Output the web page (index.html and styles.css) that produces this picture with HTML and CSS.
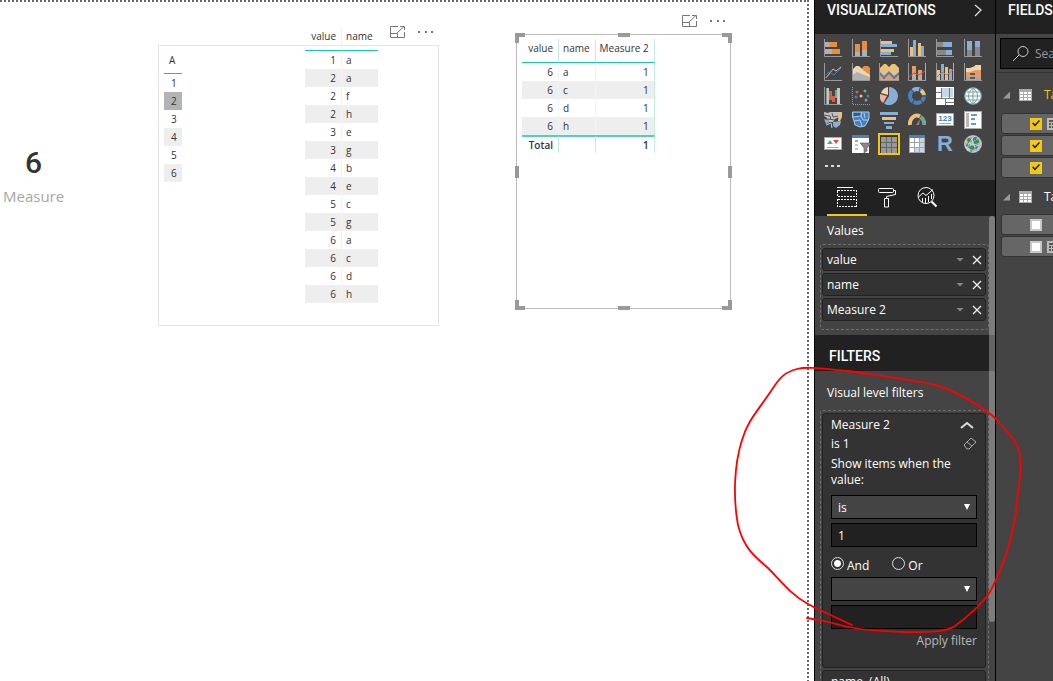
FILE: index.html
```html
<!DOCTYPE html>
<html lang="en">
<head>
<meta charset="utf-8">
<title>Report editor</title>
<link rel="stylesheet" href="styles.css">
</head>
<body>
<div class="app">
  <main class="canvas">
    <div class="guide-top"></div>
    <div class="guide-right"></div>

    <section class="visual card-visual">
      <div class="card-value">6</div>
      <div class="card-label">Measure</div>
    </section>

    <section class="visual matrix-visual">
      <table class="grid matrix">
        <thead><tr><th>A</th></tr></thead>
        <tbody>
          <tr><td>1</td></tr><tr class="selected"><td>2</td></tr><tr><td>3</td></tr>
          <tr><td>4</td></tr><tr><td>5</td></tr><tr><td>6</td></tr>
        </tbody>
      </table>
    </section>

    <section class="visual list-visual">
      <table class="grid">
        <thead><tr><th class="num">value</th><th>name</th></tr></thead>
        <tbody>
          <tr><td class="num">1</td><td>a</td></tr>
          <tr><td class="num">2</td><td>a</td></tr>
          <tr><td class="num">2</td><td>f</td></tr>
          <tr><td class="num">2</td><td>h</td></tr>
          <tr><td class="num">3</td><td>e</td></tr>
          <tr><td class="num">3</td><td>g</td></tr>
          <tr><td class="num">4</td><td>b</td></tr>
          <tr><td class="num">4</td><td>e</td></tr>
          <tr><td class="num">5</td><td>c</td></tr>
          <tr><td class="num">5</td><td>g</td></tr>
          <tr><td class="num">6</td><td>a</td></tr>
          <tr><td class="num">6</td><td>c</td></tr>
          <tr><td class="num">6</td><td>d</td></tr>
          <tr><td class="num">6</td><td>h</td></tr>
        </tbody>
      </table>
    </section>
    <div class="visual actions actions-list">
      <button class="plain" aria-label="Focus mode"><svg width="16" height="14" viewBox="0 0 16 14" fill="none" stroke="#777"><path d="M.5 6V1.500H8M.5 5V12.500H14.500V7M.5 8.500H7.500V12.500M7 8L14 1.500M10 1.500H14.500V5"/></svg></button>
      <button class="plain" aria-label="More options"><svg width="16" height="4" fill="#777"><rect x="0" y="1" width="2" height="2"/><rect x="7" y="1" width="2" height="2"/><rect x="13" y="1" width="2" height="2"/></svg></button>
    </div>

    <section class="visual selected-visual">
      <table class="grid ruled">
        <thead><tr><th class="num">value</th><th>name</th><th class="measure">Measure 2</th></tr></thead>
        <tbody>
          <tr><td class="num">6</td><td>a</td><td class="measure">1</td></tr>
          <tr><td class="num">6</td><td>c</td><td class="measure">1</td></tr>
          <tr><td class="num">6</td><td>d</td><td class="measure">1</td></tr>
          <tr><td class="num">6</td><td>h</td><td class="measure">1</td></tr>
        </tbody>
        <tfoot><tr><td class="num">Total</td><td></td><td class="measure">1</td></tr></tfoot>
      </table>
      <i class="corner nw"></i><i class="corner ne"></i><i class="corner sw"></i><i class="corner se"></i>
      <i class="side n"></i><i class="side s"></i><i class="side w"></i><i class="side e"></i>
    </section>
    <div class="visual actions actions-selected">
      <button class="plain" aria-label="Focus mode"><svg width="16" height="14" viewBox="0 0 16 14" fill="none" stroke="#777"><path d="M.5 6V1.500H8M.5 5V12.500H14.500V7M.5 8.500H7.500V12.500M7 8L14 1.500M10 1.500H14.500V5"/></svg></button>
      <button class="plain" aria-label="More options"><svg width="16" height="4" fill="#777"><rect x="0" y="1" width="2" height="2"/><rect x="7" y="1" width="2" height="2"/><rect x="13" y="1" width="2" height="2"/></svg></button>
    </div>
  </main>

  <aside class="pane viz-pane">
    <header class="pane-head"><h2>VISUALIZATIONS</h2>
      <button class="plain" aria-label="Collapse"><svg width="10" height="14" fill="none" stroke="#ddd" stroke-width="1.3"><path d="M2 2L8 7L2 13"/></svg></button>
    </header>
    <div class="gallery">
      <button class="plain" aria-label="Stacked bar chart"><svg viewBox="0 0 18 18"><path class="axis" d="M.5 0V17.500H18"/><path fill="#b0b0b0" d="M1 3h4v5H1zM1 10h7v5H1z"/><path fill="#e68f43" d="M5 3h8v5H5zM8 10h8v5H8z"/></svg></button>
      <button class="plain" aria-label="Stacked column chart"><svg viewBox="0 0 18 18"><path class="axis" d="M.5 0V17.500H18"/><path fill="#b0b0b0" d="M3 13h5v4H3zM10 11h5v6h-5z"/><path fill="#e68f43" d="M3 5h5v8H3zM10 2h5v9h-5z"/></svg></button>
      <button class="plain" aria-label="Clustered bar chart"><svg viewBox="0 0 18 18"><path class="axis" d="M.5 0V17.500H18"/><path fill="#ecc27b" d="M1 2h11v3H1zM1 10h13v3H1z"/><path fill="#88aed6" d="M1 5h16v3H1zM1 13h10v3H1z"/></svg></button>
      <button class="plain" aria-label="Clustered column chart"><svg viewBox="0 0 18 18"><path class="axis" d="M.5 0V17.500H18"/><path fill="#ecc27b" d="M2 8h3v9H2zM10 4h3v13h-3z"/><path fill="#88aed6" d="M5 1h3v16H5zM13 7h3v10h-3z"/></svg></button>
      <button class="plain" aria-label="100% stacked bar chart"><svg viewBox="0 0 18 18"><path class="axis" d="M.5 0V17.500H18"/><path fill="#888" d="M1 3h6v5H1zM1 11h9v5H1z"/><path fill="#88aed6" d="M7 3h9v5H7zM10 11h6v5h-6z"/></svg></button>
      <button class="plain" aria-label="100% stacked column chart"><svg viewBox="0 0 18 18"><path class="axis" d="M.5 0V17.500H18"/><path fill="#888" d="M3 11h5v6H3zM11 8h5v9h-5z"/><path fill="#88aed6" d="M3 2h5v9H3zM11 2h5v6h-5z"/></svg></button>

      <button class="plain" aria-label="Line chart"><svg viewBox="0 0 18 18" fill="none"><path class="axis" d="M.5 0V17.500H18"/><path stroke="#ecb29e" d="M2 15L9 6L12 8L17 4"/><path stroke="#4a80bb" d="M2 12L5 9L10 12L17 5"/></svg></button>
      <button class="plain" aria-label="Area chart"><svg viewBox="0 0 18 18"><path fill="#e68f43" d="M6 9L12 3H16L18 5V16H6z"/><path fill="#efd6af" d="M1 6L4 3H7L11 7L18 12V17H1z"/><path fill="#b0b0b0" d="M1 12L5 9L10 11L18 14V17H1z"/><path class="axis" d="M.5 0V17.500H18"/></svg></button>
      <button class="plain wide" aria-label="Stacked area chart"><svg viewBox="0 0 20 18"><path fill="#4a80bb" d="M1 7H20V15H1z"/><path fill="#ecc27b" d="M1 5L5 1H7L10 4L13 1H16L20 5V9L15 13L10 8L5 13L1 9z"/><path fill="#e99b66" d="M1 18V12L5 16L10 11L15 16L20 12V18z"/><path class="axis" d="M.5 0V17.500H20"/></svg></button>
      <button class="plain" aria-label="Line and stacked column chart"><svg viewBox="0 0 18 18" fill="none"><path class="axis" d="M.5 0V17.500H18"/><path fill="#e99b66" d="M4 3h4v8H4zM10 7h4v5h-4z"/><path fill="#b0b0b0" d="M4 11h4v6H4zM10 12h4v5h-4z"/><path stroke="#d64f3c" d="M1 14L6 10L11 12L17 8"/><path stroke="#e99b66" d="M17.500 0V17"/></svg></button>
      <button class="plain" aria-label="Line and clustered column chart"><svg viewBox="0 0 18 18" fill="none"><path class="axis" d="M.5 0V17.500H18"/><path fill="#ecc27b" d="M1 7h3v10H1zM9 4h3v13H9z"/><path fill="#88aed6" d="M5 1h3v16H5zM13 6h3v11h-3z"/><path stroke="#e36b4a" d="M1 14L6 9L11 12L17 7"/><path stroke="#e99b66" d="M17.500 0V17"/></svg></button>
      <button class="plain" aria-label="Ribbon chart"><svg viewBox="0 0 18 18"><path class="axis" d="M.5 0V17.500H18"/><path fill="#e99b66" d="M2 7H17V17H2z"/><path fill="#efd6af" d="M2 5H6L11 3V2H17V7H11L6 9H2z"/><path fill="#7c4e36" d="M6 10h5v2H6zM6 14h5v2H6z"/><path fill="#88aed6" d="M2 14h4v3H2zM7 12h4v2H7zM12 14h4v3h-4z"/></svg></button>

      <button class="plain" aria-label="Waterfall chart"><svg viewBox="0 0 18 18"><path class="axis" d="M.5 0V17.500H18"/><path fill="#c4c4c4" d="M2 1h3v16H2zM13 1h3v16h-3z"/><path fill="#75a595" d="M2 1h1v16H2zM11 3h2v8h-2z"/><path fill="#d95d45" d="M5 4h3v9H5zM8 9h3v6H8z"/></svg></button>
      <button class="plain" aria-label="Scatter chart"><svg viewBox="0 0 18 18"><path class="axis" stroke-dasharray="1" d="M.5 0V17.500H18"/><circle cx="5" cy="5" r="1.500" fill="#d95d45"/><g fill="#75a595"><circle cx="13" cy="4" r="1.500"/><circle cx="14" cy="13" r="1.500"/></g><circle cx="9" cy="9" r="1.500" fill="#ecc27b"/><g fill="#4a80bb"><circle cx="4" cy="10" r="1.500"/><circle cx="16" cy="9" r="1.500"/></g></svg></button>
      <button class="plain" aria-label="Pie chart"><svg viewBox="0 0 18 18"><path fill="#88aed6" d="M9 9V0A9 9 0 1 1 4 16.500z"/><path fill="#efd6af" d="M8 8V0A9 9 0 0 0 1 6z"/><path fill="#ecb29e" d="M7 9L0 7A9 9 0 0 0 3 16z"/></svg></button>
      <button class="plain" aria-label="Donut chart"><svg viewBox="0 0 18 18" fill="none" stroke-width="4"><circle cx="9" cy="9" r="7" stroke="#4a80bb"/><path stroke="#88aed6" d="M5 3.300A7 7 0 0 1 12 2.700"/><path stroke="#ecc27b" d="M13 3.300A7 7 0 0 1 16 8"/><path stroke="#444" stroke-width="1" d="M3 2L6 6M12 1L11 5M18 9H13M15 16L12 12M4 17L6 13"/></svg></button>
      <button class="plain" aria-label="Treemap"><svg viewBox="0 0 18 18" shape-rendering="crispEdges"><path fill="#fff" d="M0 0h18v18H0z"/><path fill="#c5d8ea" d="M5 1h8v9H5zM14 1h3v9h-3z"/><path stroke="#777" fill="none" d="M0 5.500H5M5.500 1V11M13.500 1V11M0 11.500H18M9.500 11V18M9 15.500H18"/></svg></button>
      <button class="plain" aria-label="Map"><svg viewBox="0 0 18 18" fill="none"><circle cx="9" cy="9" r="8.300" fill="#fff" stroke="#73a9d2"/><path stroke="#75a595" d="M9 1V17M1 9H17M2.500 5H15.500M2.500 13H15.500M9 1C3 5 3 13 9 17M9 1C15 5 15 13 9 17"/></svg></button>

      <button class="plain" aria-label="Filled map"><svg viewBox="0 0 18 18"><path fill="#c0c0c0" d="M0 1L4 2L6 1H15V6L11 8L9 11L5 11L3 7L0 5z"/><path fill="#88aed6" d="M9 11L17 10L16 14L12 17L9 15zM0 8L4 9L5 12L2 13z"/><path fill="#ecc27b" d="M15 1H18V6L16 10H14z"/><path fill="none" stroke="#555" d="M0 4L6 5L7 9M8 2L9 6L14 5M4 8L11 9"/><path fill="none" stroke="#ccc" d="M2 14L7 12L8 17"/></svg></button>
      <button class="plain" aria-label="Shape map"><svg viewBox="0 0 18 18"><path fill="#4a80bb" stroke="#a8cdeb" d="M.5 1H17V7L16 10L13 15L8 16L3 14L2 10L.5 6z"/><path fill="#245f91" d="M2 2h6v4H2z"/><path fill="none" stroke="#a8cdeb" d="M1 6L9 5L10 1M9 5L11 9H16M2 10L8 9L10 15M12 2L13 7"/></svg></button>
      <button class="plain" aria-label="Funnel"><svg viewBox="0 0 18 18"><path fill="#88aed6" d="M0 1h18v3H0zM4 11h10v2H4zM6 15h6v3H6z"/><path fill="#ecc27b" d="M2 6h14v3H2z"/></svg></button>
      <button class="plain" aria-label="Gauge"><svg viewBox="0 0 18 18" fill="none" stroke-width="4"><path stroke="#ecc27b" d="M2 14A7 8 0 0 1 12 5.500"/><path stroke="#75a595" d="M12.500 6A8 8 0 0 1 16 14"/><path fill="#888" stroke="none" d="M8 14L12 8L11 14z"/></svg></button>
      <button class="plain" aria-label="Card"><svg viewBox="0 0 18 18"><path fill="#fff" stroke="#aaa" d="M.5 2.500h17v12H.5z"/><path stroke="#aaa" d="M3 12.500H15"/><text class="card-digits" x="9" y="10">123</text></svg></button>
      <button class="plain" aria-label="Multi-row card"><svg viewBox="0 0 18 18" shape-rendering="crispEdges"><path fill="#fff" stroke="#aaa" d="M.5.5h17v17H.5z"/><path fill="#b8b8b8" d="M2 2h3v14H2z"/><path fill="#6e9ac8" d="M7 3h6v2H7zM7 7h4v2H7zM7 12h5v2H7z"/></svg></button>

      <button class="plain" aria-label="KPI"><svg viewBox="0 0 18 18"><path fill="#fff" stroke="#aaa" d="M.5 2.500h17v12H.5z"/><path fill="#63a48b" d="M3 9L6 5L9 9z"/><path fill="#d64f3c" d="M9 5h6L12 9z"/><path stroke="#aaa" d="M3 12.500H15"/></svg></button>
      <button class="plain wide" aria-label="Slicer"><svg viewBox="0 0 20 18"><path fill="#fff" d="M1 1h17v17H1z"/><path fill="#4a80bb" d="M1 0h17v3H1z"/><path fill="#88aed6" d="M4 5h3v2H4z"/><path fill="#ecc27b" d="M4 9h3v2H4z"/><path fill="#ecb29e" d="M4 13h3v2H4z"/><path fill="#888" stroke="#444" stroke-width=".5" d="M9 8H20L16 13V16L13 18V13z"/></svg></button>
      <button class="plain chosen" aria-label="Table"><svg viewBox="0 0 18 18" shape-rendering="crispEdges"><path fill="#333" d="M0 0h18v18H0z"/><path fill="#999" d="M1 2h16v16H1z"/><path stroke="#666" fill="none" d="M6.500 2V18M11.500 2V18M1 7.500H17M1 12.500H17"/></svg></button>
      <button class="plain" aria-label="Matrix"><svg viewBox="0 0 18 18" shape-rendering="crispEdges"><path fill="#fff" d="M1 1h16v17H1z"/><path fill="#c5d8ea" d="M11 3h6v15h-6zM6 13h6v5H6z"/><path fill="#4a80bb" d="M1 0h16v3H1z"/><path stroke="#a5a5a5" fill="none" d="M1.500 3V17.500H17M6.500 3V18M11.500 3V18M1 7.500H17M1 12.500H17M16.500 3V18"/></svg></button>
      <button class="plain r-icon" aria-label="R script visual">R</button>
      <button class="plain" aria-label="ArcGIS map"><svg viewBox="0 0 18 18"><circle cx="9" cy="9" r="9" fill="#bcbcbc"/><path fill="#388e4b" d="M3 4l4-2 1 4-4 3zM9 7l5-3 2 4-5 3zM5 12l4-2 2 4-4 3z"/><path fill="#2882bf" d="M9 2l4 0-1 3-3 1zM3 8l3 1-1 4-3-2zM10 12l4-1-1 4-3 1z"/><path fill="none" stroke="#ddd" stroke-width=".7" d="M1 6Q9 13 17 7M1 12Q9 18 15 13M5 1Q12 9 11 17M11 1Q2 9 4 16"/></svg></button>
      <button class="plain more" aria-label="Import visual"><svg viewBox="0 0 18 18"><path fill="#ddd" d="M1 6h3v2H1zM7 6h3v2H7zM13 6h3v2h-3z"/></svg></button>
    </div>
    <nav class="tabs">
      <button class="plain tab active" aria-label="Fields"><svg width="22" height="22" fill="none" stroke="#fff" shape-rendering="crispEdges"><path d="M1 1.500H17"/><path stroke-dasharray="2 1" d="M1.500 4.500H20.500V10.500H1.500zM1.500 13.500H20.500V20.500H1.500z"/></svg></button>
      <button class="plain tab" aria-label="Format"><svg width="20" height="22" fill="none" stroke="#fff"><rect x="1.500" y="2.500" width="15" height="4" rx="1"/><path d="M16.500 4.500H18.500V8.500L9.500 10.500V12.500M7.500 12.500H11.500V21H7.500z"/></svg></button>
      <button class="plain tab" aria-label="Analytics"><svg width="22" height="22" fill="none" stroke="#fff"><circle cx="10" cy="9.500" r="8"/><path d="M2.500 11L7 7L10 9.500L17 3.500M6.500 12V16M9.500 12V17.500M12.500 10V16M15.500 8V13"/><path stroke-width="2" d="M15.500 15.500L20.500 20.500"/></svg></button>
    </nav>
    <div class="scroll-area">
      <div class="scroll-thumb"></div>
      <h3 class="well-title">Values</h3>
      <div class="well">
        <div class="chip"><span>value</span><i class="caret"></i><button class="plain" aria-label="Remove value"><svg width="10" height="10" stroke="#eee" stroke-width="1.300"><path d="M1 1L9 9M9 1L1 9"/></svg></button></div>
        <div class="chip"><span>name</span><i class="caret"></i><button class="plain" aria-label="Remove name"><svg width="10" height="10" stroke="#eee" stroke-width="1.300"><path d="M1 1L9 9M9 1L1 9"/></svg></button></div>
        <div class="chip"><span>Measure 2</span><i class="caret"></i><button class="plain" aria-label="Remove Measure 2"><svg width="10" height="10" stroke="#eee" stroke-width="1.300"><path d="M1 1L9 9M9 1L1 9"/></svg></button></div>
      </div>
      <h2 class="filters-head">FILTERS</h2>
      <h3 class="well-title filter-title">Visual level filters</h3>
      <div class="well filter-well">
        <form class="filter-card">
          <div class="filter-row"><span>Measure 2</span><button type="button" class="plain collapse" aria-label="Collapse filter"><svg width="14" height="8" fill="none" stroke="#ddd" stroke-width="2"><path d="M1 7L7 2L13 7"/></svg></button></div>
          <div class="filter-row"><span>is 1</span><button type="button" class="plain" aria-label="Clear filter"><svg width="14" height="13" fill="none" stroke="#aaa"><path d="M1 8L8 1L13 5L6 12H4zM4 5L9 9"/></svg></button></div>
          <label class="hint" for="op1">Show items when the value:</label>
          <div class="select"><select id="op1"><option>is</option></select></div>
          <input class="box" type="text" value="1" aria-label="First value">
          <div class="radios">
            <label><input type="radio" name="join" checked><span>And</span></label>
            <label><input type="radio" name="join"><span>Or</span></label>
          </div>
          <div class="select"><select aria-label="Second condition"><option></option></select></div>
          <input class="box" type="text" aria-label="Second value">
          <button type="button" class="plain apply">Apply filter</button>
        </form>
        <div class="filter-card"><div class="filter-row"><span>name&nbsp; (All)</span></div></div>
      </div>
    </div>
  </aside>

  <aside class="pane fields-pane">
    <header class="pane-head"><h2>FIELDS</h2></header>
    <div class="search-row">
      <label class="search"><svg width="18" height="18" fill="none" stroke="#ccc"><circle cx="11" cy="6.500" r="5"/><path d="M7 10L1 16"/></svg><input type="text" placeholder="Search" aria-label="Search fields"></label>
    </div>
    <div class="table-name"><i class="expand"></i><svg width="13" height="12" shape-rendering="crispEdges"><path fill="#aaa" d="M0 0h13v12H0z"/><path fill="#fff" d="M1 3h3v2H1zM5 3h3v2H5zM9 3h3v2H9zM1 6h3v2H1zM5 6h3v2H5zM9 6h3v2H9zM1 9h3v2H1zM5 9h3v2H5zM9 9h3v2H9z"/></svg><span class="in-use">Table1</span></div>
    <div class="field-list">
      <div class="field"><input type="checkbox" checked aria-label="Measure 2"><svg width="12" height="12" shape-rendering="crispEdges"><path fill="#bbb" d="M0 0h12v12H0z"/><path fill="#555" d="M2 2h8v2H2zM2 5h2v2H2zM5 5h2v2H5zM2 8h2v2H2zM5 8h2v2H5z"/></svg></div>
      <div class="field"><input type="checkbox" checked aria-label="name"></div>
      <div class="field"><input type="checkbox" checked aria-label="value"></div>
    </div>
    <div class="table-name"><i class="expand"></i><svg width="13" height="12" shape-rendering="crispEdges"><path fill="#aaa" d="M0 0h13v12H0z"/><path fill="#fff" d="M1 3h3v2H1zM5 3h3v2H5zM9 3h3v2H9zM1 6h3v2H1zM5 6h3v2H5zM9 6h3v2H9zM1 9h3v2H1zM5 9h3v2H5zM9 9h3v2H9z"/></svg><span>Table2</span></div>
    <div class="field-list">
      <div class="field"><input type="checkbox" aria-label="A"></div>
      <div class="field"><input type="checkbox" aria-label="Measure"><svg width="12" height="12" shape-rendering="crispEdges"><path fill="#bbb" d="M0 0h12v12H0z"/><path fill="#555" d="M2 2h8v2H2zM2 5h2v2H2zM5 5h2v2H5zM2 8h2v2H2zM5 8h2v2H5z"/></svg></div>
    </div>
  </aside>

  <svg class="ink" width="333" height="300" viewBox="720 350 333 300" fill="none" stroke="#ff0000" stroke-width="1.800" stroke-linecap="round"><path d="M852 625C830 615 817 609 808 604C790 594 780 580 768 568C758 559 744 550 738 525C733 498 734 465 742 440C748 420 757 412 771 391C780 377 785 372 797 369C808 366 825 369 848 371C880 376 910 379 935 385C955 390 986 409 996 419C1007 432 1018 441 1020 455C1023 470 1018 484 1016 512C1011 545 1001 571 991 590C983 604 963 620 955 626C944 633 925 632 905 632C885 631 860 631 840 625C829 622 820 620 807 618"/></svg>
</div>
</body>
</html>
```

FILE: styles.css
```css
* { box-sizing: border-box; }

body {
  margin: 0;
  font-family: "Open Sans", "Noto Sans", sans-serif;
  font-size: 12px;
  line-height: 16px;
  color: #333;
  background: #fff;
}

h2, h3 { margin: 0; font-weight: 400; }

.plain {
  display: flex;
  align-items: center;
  justify-content: center;
  margin: 0;
  padding: 0;
  border: 0;
  background: none;
  color: inherit;
  font: inherit;
}

.app {
  position: relative;
  display: flex;
  height: 100vh;
  overflow: hidden;
}

/* Report canvas */
.canvas { position: relative; flex: 1; min-width: 0; overflow: hidden; }

.guide-top, .guide-right { position: absolute; top: 0; right: 5px; }
.guide-top {
  left: 0;
  height: 2px;
  background: repeating-linear-gradient(90deg, #666 0 2px, #fff 2px 4px);
}
.guide-right {
  bottom: 0;
  width: 2px;
  background: repeating-linear-gradient(#666 0 2px, #fff 2px 4px);
}

.visual { position: absolute; }

.card-visual { left: 3px; top: 145px; text-align: center; }
.card-value { font-family: Roboto, sans-serif; font-size: 30px; font-weight: 500; line-height: 36px; }
.card-label { margin-top: 4px; font-size: 15px; line-height: 22px; color: #a6a6a6; }

.matrix-visual {
  left: 158px;
  top: 45px;
  width: 281px;
  height: 281px;
  padding: 5px;
  border: 1px solid #e6e6e6;
}
.list-visual { left: 305px; top: 27px; }
.selected-visual {
  left: 516px;
  top: 34px;
  width: 215px;
  height: 275px;
  padding: 4px 5px;
  border: 1px solid #bbb;
}

.grid { border-collapse: separate; border-spacing: 0; font-size: 10px; line-height: 14px; }
.grid th {
  height: 24px;
  padding: 2px 5px;
  border-bottom: 1px solid #1fbfae;
  font-weight: 400;
  text-align: left;
  vertical-align: top;
}
.grid td { height: 18px; padding: 0 5px; }
.grid td + td, .grid th + th { padding-left: 4px; border-left: 1px solid #eef6f5; }
.grid tbody tr:nth-child(even) td { background: #eee; }
.grid .num { min-width: 36px; text-align: right; }
.grid .measure { text-align: right; }

.matrix th { height: 23px; padding: 2px 5px; }
.matrix td { padding: 0 5px 0 7px; text-align: center; }
.matrix tbody tr.selected td { background: #b3b3b3; }

.ruled th + th, .ruled tfoot td + td { border-left-color: #c5ebe6; }
.ruled .measure { border-right: 1px solid #c5ebe6; }
.ruled tfoot td { border-top: 2px solid #50cfc2; font-weight: 600; }

.list-visual th { padding-top: 2px; }

.corner, .side { position: absolute; }
.corner { width: 10px; height: 10px; border: 0 solid #999; }
.nw { left: -2px; top: -2px; border-width: 4px 0 0 4px; }
.ne { right: -2px; top: -2px; border-width: 4px 4px 0 0; }
.sw { left: -2px; bottom: -2px; border-width: 0 0 4px 4px; }
.se { right: -2px; bottom: -2px; border-width: 0 4px 4px 0; }
.side { background: #999; }
.n, .s { left: calc(50% - 6px); width: 12px; height: 4px; }
.w, .e { top: calc(50% - 6px); width: 4px; height: 12px; }
.n { top: -2px; }
.s { bottom: -2px; }
.w { left: -2px; }
.e { right: -2px; }

.actions { display: flex; align-items: center; gap: 12px; }
.actions-list { left: 390px; top: 25px; }
.actions-selected { left: 682px; top: 14px; }

/* Side panes */
.pane { display: flex; flex-direction: column; overflow: hidden; background: #444; color: #fff; }
.viz-pane { flex: 0 0 182px; border: 0 solid #000; border-width: 0 1px; }
.fields-pane { flex: 0 0 57px; }

.pane-head {
  flex: none;
  display: flex;
  align-items: center;
  justify-content: space-between;
  height: 34px;
  padding: 0 12px 14px;
  background: #212121;
}
.pane-head h2, .filters-head { font-family: Roboto, sans-serif; font-size: 14px; font-weight: 500; }

.gallery {
  flex: none;
  display: grid;
  grid-template-columns: repeat(6, 28px);
  grid-auto-rows: 24px;
  height: 146px;
  padding: 2px 4px;
}
.gallery svg { width: 18px; height: 18px; }
.gallery .wide svg { width: 20px; }
.gallery .axis { fill: none; stroke: #999; }
.chosen { place-self: center; width: 22px; height: 22px; border: 2px solid #f2c811; }
.card-digits { font: 700 8px "Liberation Sans", sans-serif; text-anchor: middle; fill: #4a80bb; }
.gallery .r-icon { font: 700 22px "Liberation Sans", sans-serif; color: #88aed6; }

.tabs { flex: none; display: flex; height: 36px; padding-left: 12px; background: #212121; }
.tab { width: 40px; border-bottom: 2px solid transparent; }
.tab.active { border-color: #f2c811; }

.scroll-area { position: relative; flex: 1; min-height: 0; overflow: hidden; }
.scroll-thumb {
  position: absolute;
  top: 0;
  right: 0;
  width: 6px;
  height: 406px;
  border-radius: 3px;
  background: rgba(255, 255, 255, .3);
}

.well-title { padding: 7px 12px 5px; font-size: 12px; line-height: 16px; }
.well {
  display: flex;
  flex-direction: column;
  gap: 2px;
  margin: 0 6px 0 5px;
  padding: 3px 2px 8px 1px;
  border: 1px dashed #6e6e6e;
  border-radius: 3px;
}
.chip, .filter-card { border: 1px solid #222; border-radius: 3px; background: #333; }
.chip { display: flex; align-items: center; height: 23px; padding: 0 3px 0 4px; }
.chip span { flex: 1; }
.caret { width: 8px; height: 4px; margin-right: 8px; background: #888; clip-path: polygon(0 0, 100% 0, 50% 100%); }

.filters-head { margin-top: 5px; padding: 0 14px; line-height: 42px; height: 36px; background: #212121; }
.filter-title { padding-top: 14px; padding-bottom: 9px; }
.filter-well { padding-top: 2px; }

.filter-card { display: flex; flex-direction: column; min-height: 255px; padding: 1px 8px; }
.filter-row { display: flex; align-items: center; justify-content: space-between; height: 19px; }
.collapse { margin-right: 3px; }
.hint { margin: 3px 0 7px; }
.select { position: relative; display: flex; }
.select::after {
  content: "";
  position: absolute;
  top: 9px;
  right: 7px;
  width: 6px;
  height: 6px;
  background: #fff;
  clip-path: polygon(0 0, 100% 0, 50% 100%);
}
.select select, .box {
  width: 100%;
  height: 24px;
  margin: 0;
  padding: 1px 6px 0;
  border: 1px solid #000;
  border-radius: 0;
  color: #fff;
  font: inherit;
}
.select select { appearance: none; background: #444; }
.box { margin-top: 4px; background: #212121; }

.radios { display: flex; gap: 23px; height: 30px; align-items: center; padding-top: 7px; }
.radios label { display: flex; align-items: center; gap: 3px; }
.radios input {
  appearance: none;
  width: 13px;
  height: 13px;
  margin: 0 0 4px;
  border: 1px solid #ddd;
  border-radius: 50%;
}
.radios input:checked { background: radial-gradient(circle, #fff 0 3px, transparent 4px); }
.apply { align-self: flex-end; margin-top: 4px; color: #b8b8b8; }

/* Fields pane */
.search-row { flex: none; height: 39px; padding: 4px 0 0 4px; border-bottom: 1px solid #333; }
.search {
  display: flex;
  align-items: center;
  gap: 5px;
  width: 180px;
  height: 31px;
  padding-left: 11px;
  border: 1px solid #000;
  background: #212121;
}
.search input { width: 120px; padding: 0; border: 0; background: none; color: #fff; font: inherit; }
.search input::placeholder { color: #999; opacity: 1; }

.table-name { flex: none; display: flex; align-items: center; height: 36px; padding: 2px 0 0 7px; }
.table-name svg { flex: none; margin: 0 12px 0 9px; }
.search-row + .table-name { height: 40px; padding-top: 4px; }
.in-use { color: #f2c811; }
.expand { flex: none; width: 7px; height: 7px; background: #999; clip-path: polygon(100% 0, 100% 100%, 0 100%); }
.field-list { display: flex; flex-direction: column; gap: 1px; }
.field {
  display: flex;
  align-items: center;
  gap: 5px;
  width: 180px;
  height: 21px;
  margin-left: 5px;
  padding-left: 28px;
  border: 1px solid #333;
  border-radius: 3px;
  background: #666;
}
.field input {
  appearance: none;
  width: 12px;
  height: 12px;
  margin: 0;
  border: 2px solid #c8c8c8;
  background: #fff;
}
.field input:checked { display: grid; place-items: center; border: 0; background: #f2c811; }
.field input:checked::before {
  content: "";
  width: 8px;
  height: 8px;
  background: #222;
  clip-path: polygon(0 50%, 16% 34%, 38% 58%, 86% 6%, 100% 20%, 38% 88%);
}

/* Hand-drawn annotation over the report and panes */
.ink { position: absolute; top: 350px; right: 0; pointer-events: none; }
```
